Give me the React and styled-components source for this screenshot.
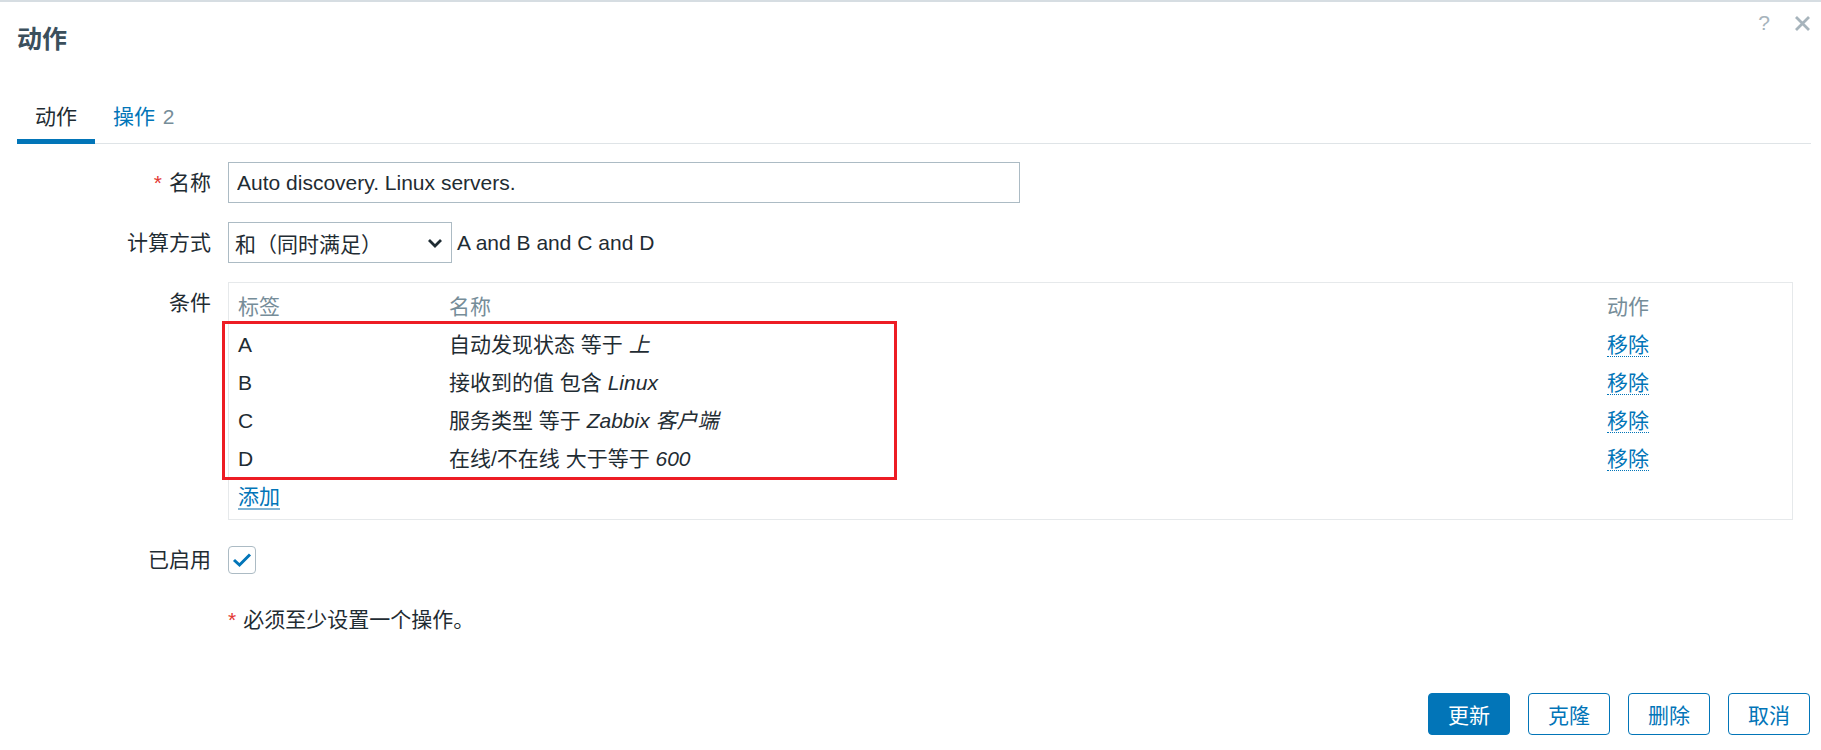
import React from 'react';
import styled, { createGlobalStyle } from 'styled-components';

const GlobalStyle = createGlobalStyle`
  html, body { margin: 0; padding: 0; background: #fff; }
  body {
    font-family: "Liberation Sans", Arial, "Noto Sans CJK SC", sans-serif;
    font-size: 21px;
    color: #1f2c33;
  }
  * { box-sizing: border-box; }
`;

const Dialog = styled.div`
  width: 1821px;
  height: 750px;
  border-top: 2px solid #d6dde2;
  padding: 0 10px 0 17px;
  display: flex;
  flex-direction: column;
  overflow: hidden;
`;

const Header = styled.div`
  height: 72px;
  display: flex;
  justify-content: space-between;
  align-items: flex-start;
`;

const Title = styled.h4`
  margin: 0;
  padding-top: 22px;
  font-size: 25px;
  line-height: 30px;
  font-weight: bold;
  color: #3b4f5c;
`;

const Tools = styled.div`
  display: flex;
  align-items: center;
  gap: 24px;
  padding-top: 10px;
  color: #a7b4bc;
`;

const HelpMark = styled.span`
  font-size: 21px;
  line-height: 22px;
  color: #a7b4bc;
`;

const TabBar = styled.div`
  display: flex;
  border-bottom: 1px solid #dfe4e7;
`;

const Tab = styled.div`
  padding: 28px 18px 7px;
  line-height: 30px;
  margin-bottom: -1px;
  border-bottom: 5px solid ${p => (p.$active ? '#0275b8' : 'transparent')};
  color: ${p => (p.$active ? '#1f2c33' : '#0275b8')};
  white-space: nowrap;
`;

const TabCount = styled.span`
  color: #768d99;
  margin-left: 2px;
`;

const Form = styled.div`
  display: grid;
  grid-template-columns: 194px 1fr;
  column-gap: 17px;
  row-gap: 19px;
  padding-top: 18px;
`;

const Label = styled.div`
  text-align: right;
  line-height: 41px;
  white-space: nowrap;
`;

const Asterisk = styled.span`
  color: #e33734;
  margin-right: 7px;
`;

const TextInput = styled.input`
  display: block;
  width: 792px;
  height: 41px;
  margin: 0;
  border: 1px solid #acbbc4;
  border-radius: 0;
  padding: 0 8px;
  font: inherit;
  color: #1f2c33;
  background: #fff;
  outline: none;
`;

const FieldLine = styled.div`
  display: flex;
  align-items: center;
  gap: 5px;
  height: 41px;
`;

const SelectBox = styled.div`
  width: 224px;
  height: 41px;
  border: 1px solid #acbbc4;
  display: flex;
  align-items: center;
  justify-content: space-between;
  padding: 0 8px 0 6px;
  white-space: nowrap;
`;

const ConditionsBox = styled.div`
  position: relative;
  width: 1565px;
  border: 1px solid #e6e9eb;
  padding: 5px 9px 3px;
`;

const CondGrid = styled.div`
  display: grid;
  grid-template-columns: 211px 1158px 1fr;
  grid-auto-rows: 38px;
  align-items: center;
`;

const HeadCell = styled.div`
  color: #768d99;
  line-height: 24px;
  white-space: nowrap;
`;

const Cell = styled.div`
  line-height: 24px;
  white-space: nowrap;
`;

const Em = styled.i`
  font-style: italic;
`;

const LinkText = styled.span`
  display: inline-block;
  line-height: 23px;
  color: #0275b8;
  border-bottom: 1px dotted #0275b8;
  cursor: pointer;
`;

const AddLink = styled.span`
  display: inline-block;
  line-height: 23px;
  color: #0275b8;
  border-bottom: 2px solid #80b3d3;
  cursor: pointer;
`;

const Highlight = styled.div`
  position: absolute;
  left: -7px;
  top: 38px;
  width: 675px;
  height: 159px;
  border: 3px solid #ed1c24;
  pointer-events: none;
`;

const CheckCell = styled.div`
  height: 41px;
  display: flex;
  align-items: center;
`;

const CheckBox = styled.div`
  width: 28px;
  height: 28px;
  border: 1px solid #acbbc4;
  border-radius: 4px;
  display: flex;
  align-items: center;
  justify-content: center;
  background: #fff;
`;

const Note = styled.div`
  grid-column: 2;
  line-height: 41px;
  white-space: nowrap;
`;

const Footer = styled.div`
  margin-top: 53px;
  display: flex;
  justify-content: flex-end;
  gap: 18px;
  padding-right: 1px;
`;

const Button = styled.button`
  width: 82px;
  height: 42px;
  border-radius: 4px;
  border: 1px solid #0275b8;
  background: ${p => (p.$primary ? '#0275b8' : '#fff')};
  color: ${p => (p.$primary ? '#fff' : '#0275b8')};
  font: inherit;
  padding: 0;
  cursor: pointer;
`;

const conditions = [
  { label: 'A', parts: [['自动发现状态 等于 ', false], ['上', true]] },
  { label: 'B', parts: [['接收到的值 包含 ', false], ['Linux', true]] },
  { label: 'C', parts: [['服务类型 等于 ', false], ['Zabbix 客户端', true]] },
  { label: 'D', parts: [['在线/不在线 大于等于 ', false], ['600', true]] },
];

const CloseIcon = () => (
  <svg width="17" height="17" viewBox="0 0 17 17">
    <path d="M2 2 L15 15 M15 2 L2 15" stroke="#a7b4bc" strokeWidth="2.8" strokeLinecap="butt" fill="none" />
  </svg>
);

const Chevron = () => (
  <svg width="16" height="10" viewBox="0 0 16 10">
    <path d="M2 2 L8 8 L14 2" stroke="#1f2c33" strokeWidth="2.8" fill="none" />
  </svg>
);

const Check = () => (
  <svg width="20" height="16" viewBox="0 0 20 16">
    <path d="M2 8 L7.5 13 L18 2.5" stroke="#0275b8" strokeWidth="3" fill="none" />
  </svg>
);

export default function App() {
  return (
    <>
      <GlobalStyle />
      <Dialog>
        <Header>
          <Title>动作</Title>
          <Tools>
            <HelpMark>?</HelpMark>
            <CloseIcon />
          </Tools>
        </Header>
        <TabBar>
          <Tab $active>动作</Tab>
          <Tab>
            操作<TabCount> 2</TabCount>
          </Tab>
        </TabBar>
        <Form>
          <Label>
            <Asterisk>*</Asterisk>名称
          </Label>
          <div>
            <TextInput defaultValue="Auto discovery. Linux servers." />
          </div>

          <Label>计算方式</Label>
          <FieldLine>
            <SelectBox>
              <span>和（同时满足）</span>
              <Chevron />
            </SelectBox>
            <span>A and B and C and D</span>
          </FieldLine>

          <Label>条件</Label>
          <ConditionsBox>
            <CondGrid>
              <HeadCell>标签</HeadCell>
              <HeadCell>名称</HeadCell>
              <HeadCell>动作</HeadCell>
              {conditions.map(c => (
                <React.Fragment key={c.label}>
                  <Cell>{c.label}</Cell>
                  <Cell>
                    {c.parts.map(([t, it], i) => (it ? <Em key={i}>{t}</Em> : <span key={i}>{t}</span>))}
                  </Cell>
                  <Cell>
                    <LinkText>移除</LinkText>
                  </Cell>
                </React.Fragment>
              ))}
              <Cell>
                <AddLink>添加</AddLink>
              </Cell>
            </CondGrid>
            <Highlight />
          </ConditionsBox>

          <Label>已启用</Label>
          <CheckCell>
            <CheckBox>
              <Check />
            </CheckBox>
          </CheckCell>

          <Note>
            <Asterisk>*</Asterisk>必须至少设置一个操作。
          </Note>
        </Form>
        <Footer>
          <Button $primary>更新</Button>
          <Button>克隆</Button>
          <Button>删除</Button>
          <Button>取消</Button>
        </Footer>
      </Dialog>
    </>
  );
}
